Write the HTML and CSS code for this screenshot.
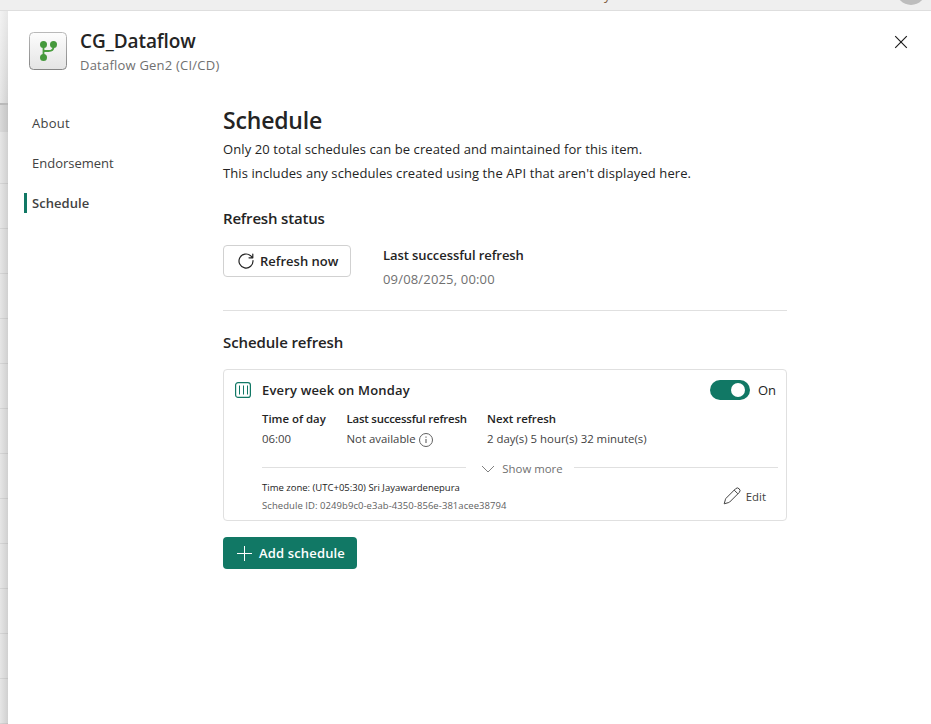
FILE: index.html
```html
<!DOCTYPE html>
<html lang="en">
<head>
<meta charset="utf-8">
<title>CG_Dataflow</title>
<link rel="stylesheet" href="styles.css">
</head>
<body>
<div class="topbar"><span class="topbar-text">y</span><span class="avatar"></span></div>
<div class="workspace">
  <div class="backdrop"><div class="backdrop-head"></div><div class="backdrop-sub"></div><div class="backdrop-rows"></div></div>
  <main class="panel">
    <header class="panel-header">
      <svg class="item-icon" width="40" height="40" viewBox="0 0 40 40">
        <defs>
          <linearGradient id="tile" x1="0" y1="0" x2="0" y2="1"><stop offset="0" stop-color="#fdfdfd"/><stop offset="1" stop-color="#e4e4e4"/></linearGradient>
          <linearGradient id="edge" x1="0" y1="0" x2="0" y2="1"><stop offset="0" stop-color="#b9b9b9"/><stop offset="1" stop-color="#858585"/></linearGradient>
        </defs>
        <rect x="1.500" y="2.500" width="37" height="37" rx="4" fill="url(#tile)" stroke="url(#edge)"/>
        <path d="M15.500 14v14M15.500 21h5q5 0 5-4v-3" fill="none" stroke="#4a9e3f" stroke-width="1.800"/>
        <g fill="#45993c"><circle cx="15.500" cy="14.500" r="3.500"/><circle cx="25.500" cy="14.500" r="3.500"/><circle cx="15.500" cy="27.500" r="3.500"/></g>
      </svg>
      <div class="titles"><h1>CG_Dataflow</h1><p>Dataflow Gen2 (CI/CD)</p></div>
      <svg class="close" width="14" height="14" viewBox="0 0 14 14"><path d="M1.200 1.200l11.600 11.600M12.800 1.200L1.200 12.800" stroke="#1b1b1b" stroke-width="1.150"/></svg>
    </header>
    <div class="body">
      <nav class="nav"><a>About</a><a>Endorsement</a><a class="active">Schedule</a></nav>
      <section class="content">
        <h2>Schedule</h2>
        <p class="intro">Only 20 total schedules can be created and maintained for this item.</p>
        <p class="intro">This includes any schedules created using the API that aren't displayed here.</p>
        <h3 class="status-title">Refresh status</h3>
        <div class="status">
          <button class="refresh">
            <svg width="20" height="20" viewBox="0 0 20 20" fill="none" stroke="#242424" stroke-width="1.200" stroke-linecap="round" stroke-linejoin="round"><path d="M17 9.500A7 7 0 1 1 14.800 4.900L16.800 6.700M16.800 3v3.800H13"/></svg>
            Refresh now
          </button>
          <div class="last"><strong>Last successful refresh</strong><span class="date">09/08/2025, 00:00</span></div>
        </div>
        <h3 class="sched-title">Schedule refresh</h3>
        <article class="card">
          <div class="card-head">
            <svg width="16" height="16" viewBox="0 0 16 16" fill="none" stroke="#117865"><rect x=".6" y=".6" width="14.800" height="14.800" rx="2.500" stroke-width="1.200"/><path d="M4.500 3.500v9M8.500 3.500v9M12.500 3.500v9" stroke-width="1"/></svg>
            <strong>Every week on Monday</strong>
            <span class="toggle"></span><span class="on">On</span>
          </div>
          <div class="facts">
            <div><strong>Time of day</strong><span>06:00</span></div>
            <div><strong class="tight">Last successful refresh</strong><span class="na">Not available<svg width="16" height="16" viewBox="0 0 16 16" fill="none" stroke="#616161"><circle cx="8" cy="8" r="6.500"/><path d="M8 7v4M8 4.600v1.200" stroke-width="1.100"/></svg></span></div>
            <div><strong>Next refresh</strong><span>2 day(s) 5 hour(s) 32 minute(s)</span></div>
          </div>
          <div class="more"><i></i><svg width="14" height="8" viewBox="0 0 14 8" fill="none" stroke="#808080" stroke-width="1"><path d="M1 1l6 6 6-6"/></svg><span>Show more</span><i></i></div>
          <div class="foot">
            <div class="ids"><p class="zone">Time zone: (UTC+05:30) Sri Jayawardenepura</p><p class="sid">Schedule ID: 0249b9c0-e3ab-4350-856e-381acee38794</p></div>
            <div class="edit"><svg width="20" height="20" viewBox="0 0 20 20" fill="none" stroke="#424242" stroke-width="1" stroke-linejoin="round"><path d="M17.200 2.800a2.600 2.600 0 0 0-3.700 0L4 12.300a2 2 0 0 0-.5.9L2.200 17.800l4.600-1.300a2 2 0 0 0 .9-.5l9.500-9.500a2.600 2.600 0 0 0 0-3.700zM12.200 4.100l3.700 3.700"/></svg><span>Edit</span></div>
          </div>
        </article>
        <button class="add"><svg width="16" height="16" viewBox="0 0 16 16"><path d="M8.500 1v15M1 8.500h15" stroke="#fff"/></svg>Add schedule</button>
      </section>
    </div>
  </main>
</div>
</body>
</html>
```
FILE: styles.css
```css
* { box-sizing: border-box; }
body, h1, h2, h3, p { margin: 0; }
body {
  height: 724px;
  overflow: hidden;
  display: flex;
  flex-direction: column;
  background: #fff;
  color: #242424;
  font: 400 13px/20px "Open Sans", "Noto Sans", sans-serif;
  white-space: nowrap;
}
strong, h1, h2, h3 { font-weight: 600; }
button { font: inherit; color: inherit; font-weight: 600; display: flex; align-items: center; }
svg { display: block; flex: none; }

.topbar { position: relative; height: 11px; flex: none; overflow: hidden; background: #efefef; border-bottom: 1px solid #dedede; }
.topbar-text { position: absolute; left: 604px; top: -15px; font-size: 13px; line-height: 20px; color: #805c3c; }
.avatar { position: absolute; left: 896px; top: -25px; width: 30px; height: 30px; border-radius: 50%; background: #bdbdbd; }

.workspace { flex: 1; display: flex; min-height: 0; }
.backdrop { width: 8px; flex: none; display: flex; flex-direction: column; background: linear-gradient(90deg, #e6e6e6, #d0d0d0); }
.backdrop-head { height: 94px; border-bottom: 2px solid #b9b9b9; background: linear-gradient(rgba(255,255,255,.5), rgba(255,255,255,0)); }
.backdrop-sub { height: 27px; background: rgba(0, 0, 0, .05); }
.backdrop-rows { flex: 1; background: repeating-linear-gradient(transparent 0 44px, rgba(0,0,0,.07) 44px 45px); background-position: 0 7px; }

.panel { flex: 1; background: #fff; }
.panel-header { display: flex; padding: 19px 22px 0 20px; height: 92px; }
.titles { margin-left: 12px; flex: 1; }
.titles h1 { font-size: 19px; line-height: 22px; letter-spacing: -.08px; }
.titles p { line-height: 20px; margin-top: 3px; color: #707070; letter-spacing: .22px; }
.close { margin: 5px 1px 0 0; }

.body { display: flex; }
.nav { width: 215px; padding-left: 16px; display: flex; flex-direction: column; gap: 20px; padding-top: 10px; color: #424242; }
.nav a { height: 20px; padding-left: 8px; }
.nav a:first-child { letter-spacing: .25px; }
.nav .active { padding-left: 5px; border-left: 3px solid #117865; font-weight: 600; letter-spacing: .06px; }

.content { width: 564px; }
.content h2 { font-size: 23px; line-height: 32px; padding: 1px 0; letter-spacing: -.18px; }
.intro { line-height: 24px; letter-spacing: .095px; }
.content h3 { font-size: 15px; line-height: 22px; }
.content .status-title { margin-top: 22px; letter-spacing: -.18px; }
.status { display: flex; margin-top: 14px; height: 68px; border-bottom: 1px solid #e0e0e0; }
.refresh { width: 128px; height: 32px; margin-top: 2px; padding: 0 0 0 12px; gap: 4px; border: 1px solid #d1d1d1; border-radius: 4px; background: #fff; }
.last { margin-left: 32px; display: flex; flex-direction: column; line-height: 24px; }
.last strong { letter-spacing: -.08px; }
.date { color: #707070; letter-spacing: .17px; }
.content .sched-title { margin-top: 20px; letter-spacing: -.11px; }

.card { margin-top: 16px; height: 152px; padding: 9px 8px 0 11px; border: 1px solid #e0e0e0; border-radius: 4px; }
.card-head { display: flex; align-items: center; height: 22px; }
.card-head strong { margin-left: 11px; flex: 1; letter-spacing: .17px; }
.toggle { width: 40px; height: 20px; padding: 3px; border-radius: 10px; background: #117865; }
.toggle::after { content: ""; display: block; width: 14px; height: 14px; margin-left: auto; margin-right: 2px; border-radius: 50%; background: #fff; }
.on { margin: 0 1px 0 8px; width: 19px; }
.facts { display: grid; grid-template-columns: 84.500px 140.500px auto; margin: 8px 0 0 27px; font-size: 11.400px; }
.facts div { display: flex; flex-direction: column; line-height: 20px; color: #424242; }
.facts strong { color: #242424; }
.facts .tight { letter-spacing: -.2px; }
.facts .na { display: flex; align-items: center; gap: 2px; height: 20px; }
.na svg { margin-top: 2px; }
.more { display: flex; align-items: center; height: 18px; margin: 11px 0 0 27px; font-size: 11.400px; color: #707070; }
.more i { flex: 1; height: 1px; margin-top: -3px; background: #e0e0e0; }
.more svg { margin: 0 7px 0 15px; }
.more span { margin-right: 11px; }
.foot { display: flex; margin: 1px 0 0 27px; }
.ids { flex: 1; font-size: 9.500px; line-height: 18px; color: #616161; }
.zone { color: #242424; }
.sid { letter-spacing: .06px; }
.edit { display: flex; align-items: center; gap: 4px; margin-right: 12px; font-size: 11.400px; color: #424242; height: 36px; }
.edit svg { margin-top: -2px; }
.add { margin-top: 16px; width: 134px; height: 32px; padding: 0 0 0 13px; gap: 7px; border: 0; border-radius: 4px; background: #117865; color: #fff; letter-spacing: .15px; }
```
